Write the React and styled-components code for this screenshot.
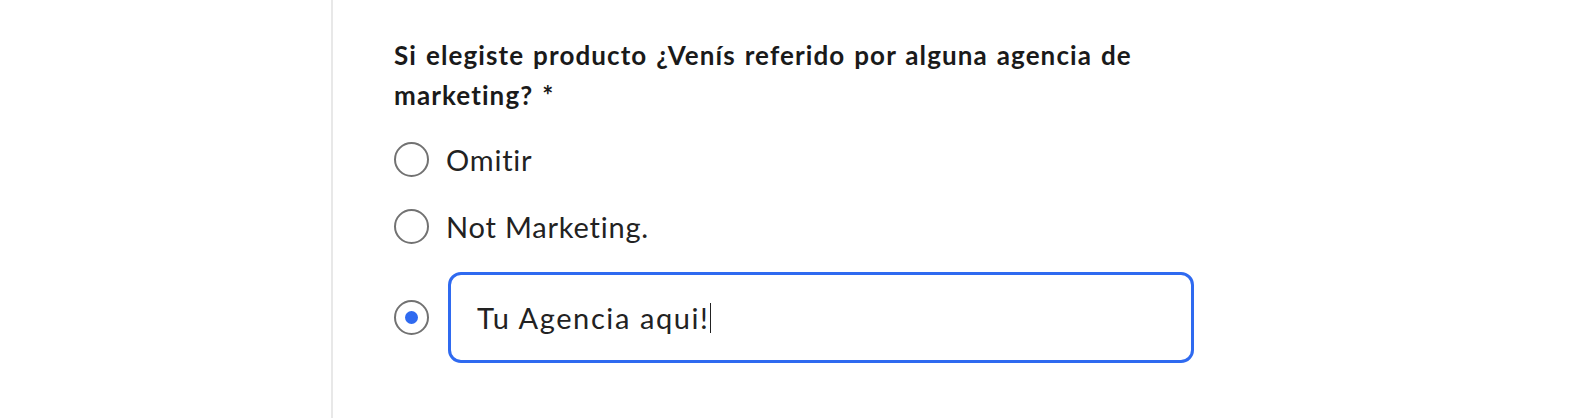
import React from "react";
import styled, { createGlobalStyle } from "styled-components";

const GlobalStyle = createGlobalStyle`
  html, body {
    margin: 0;
    padding: 0;
    background: #ffffff;
  }
  body {
    font-family: "Lato", "Noto Sans", sans-serif;
    color: #1f1f1f;
  }
`;

const Page = styled.div`
  display: flex;
  min-height: 418px;
  padding-left: 331px;
  box-sizing: border-box;
`;

const Column = styled.section`
  flex: 1;
  border-left: 2px solid #e8e8e8;
  padding: 35px 0 0 61px;
  min-height: 418px;
  box-sizing: border-box;
`;

const Question = styled.h2`
  margin: 0 0 27px;
  max-width: 746px;
  font-size: 26px;
  font-weight: 700;
  letter-spacing: 1.1px;
  word-spacing: 1.5px;
  line-height: 40px;
  color: #1a1a1a;
`;

const Options = styled.div`
  display: flex;
  flex-direction: column;
  gap: 32px;
`;

const Option = styled.label`
  display: flex;
  align-items: center;
  gap: ${(p) => (p.$field ? "19px" : "17px")};
  margin-top: ${(p) => (p.$field ? "-4px" : "0")};
  font-size: 29px;
  letter-spacing: 0.8px;
  color: #222222;
  cursor: pointer;
`;

const Radio = styled.span`
  flex: none;
  width: 35px;
  height: 35px;
  box-sizing: border-box;
  border: 2px solid #727272;
  border-radius: 50%;
  display: flex;
  align-items: center;
  justify-content: center;

  &::after {
    content: "";
    width: 13px;
    height: 13px;
    border-radius: 50%;
    background: ${(p) => (p.$checked ? "#2f6af0" : "transparent")};
  }
`;

const TextBox = styled.div`
  width: 746px;
  height: 91px;
  box-sizing: border-box;
  border: 3px solid #2f6af0;
  border-radius: 13px;
  padding: 0 26px;
  display: flex;
  align-items: center;
  font-size: 29px;
  letter-spacing: 1.6px;
  color: #222222;
`;

const Caret = styled.span`
  display: inline-block;
  width: 1.5px;
  height: 30px;
  background: #222222;
`;

const options = [
  { label: "Omitir" },
  { label: "Not Marketing." },
];

export default function App() {
  return (
    <>
      <GlobalStyle />
      <Page>
        <Column>
          <Question>
            Si elegiste producto ¿Venís referido por alguna agencia de marketing? *
          </Question>
          <Options>
            {options.map((o) => (
              <Option key={o.label}>
                <Radio />
                {o.label}
              </Option>
            ))}
            <Option $field>
              <Radio $checked />
              <TextBox>
                Tu Agencia aqui!
                <Caret />
              </TextBox>
            </Option>
          </Options>
        </Column>
      </Page>
    </>
  );
}
